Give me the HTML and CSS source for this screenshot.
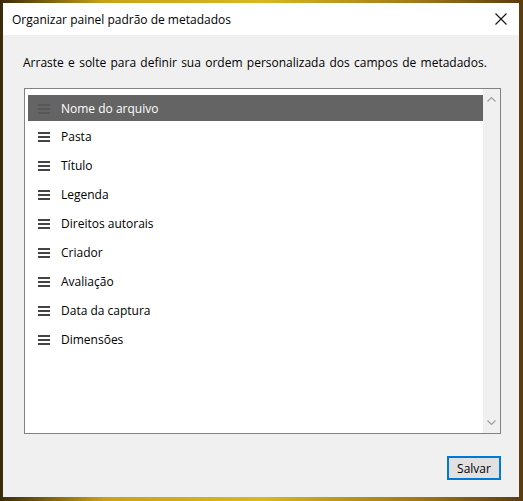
FILE: index.html
```html
<!DOCTYPE html>
<html lang="pt-BR">
<head>
    <meta charset="UTF-8">
    <title>Organizar painel padrão de metadados</title>
    <link rel="stylesheet" href="styles.css">
</head>
<body>
    <div class="dialog">
        <div class="title-bar">
            <span class="title">Organizar painel padrão de metadados</span>
            <svg class="close" width="12" height="12" viewBox="0 0 12 12">
                <path d="M0.5 0.5 L11.5 11.5 M11.5 0.5 L0.5 11.5" stroke="#111" stroke-width="1.1" fill="none"/>
            </svg>
        </div>
        <div class="content">
            <p class="hint">Arraste e solte para definir sua ordem personalizada dos campos de metadados.</p>
            <div class="list-box">
                <ul class="fields">
                    <li class="selected"><span class="grip"></span>Nome do arquivo</li>
                    <li><span class="grip"></span>Pasta</li>
                    <li><span class="grip"></span>Título</li>
                    <li><span class="grip"></span>Legenda</li>
                    <li><span class="grip"></span>Direitos autorais</li>
                    <li><span class="grip"></span>Criador</li>
                    <li><span class="grip"></span>Avaliação</li>
                    <li><span class="grip"></span>Data da captura</li>
                    <li><span class="grip"></span>Dimensões</li>
                </ul>
                <div class="scrollbar">
                    <svg width="9" height="5" viewBox="0 0 9 5"><path d="M0.5 4.5 L4.5 0.5 L8.5 4.5" stroke="#a0a0a0" stroke-width="1.2" fill="none"/></svg>
                    <svg width="9" height="5" viewBox="0 0 9 5"><path d="M0.5 0.5 L4.5 4.5 L8.5 0.5" stroke="#a0a0a0" stroke-width="1.2" fill="none"/></svg>
                </div>
            </div>
            <div class="actions">
                <button type="button">Salvar</button>
            </div>
        </div>
    </div>
</body>
</html>
```

FILE: styles.css
```css
* {
    margin: 0;
    padding: 0;
    box-sizing: border-box;
}

body {
    width: 523px;
    height: 501px;
    padding: 3px 4px 4px 3px;
    background: linear-gradient(90deg, #3a2a08 0%, #c9a21a 20%, #d8b820 50%, #a07818 80%, #5a3c10 100%);
    font-family: 'Open Sans', 'Noto Sans', sans-serif;
    font-size: 12px;
    color: #000;
}

.dialog {
    height: 100%;
    display: flex;
    flex-direction: column;
    background: #f0f0f0;
}

.title-bar {
    height: 32px;
    background: #fff;
    display: flex;
    align-items: center;
    justify-content: space-between;
    padding: 0 12px 0 9px;
}

.content {
    flex: 1;
    display: flex;
    flex-direction: column;
    padding: 19px 18px 17px 20px;
}

.hint {
    line-height: 18px;
    margin-bottom: 16px;
    word-spacing: 1.2px;
}

.list-box {
    height: 346px;
    margin-left: 1px;
    border: 1px solid #828282;
    background: #fff;
    display: flex;
    padding: 4px 0 0 3px;
}

.fields {
    list-style: none;
    flex: 1;
}

.fields li {
    height: 29px;
    display: flex;
    align-items: center;
    padding-left: 10px;
}

.fields li.selected {
    padding-top: 2px;
    background: linear-gradient(#fff 0, #fff 2px, #646464 2px, #646464 28px, #fff 28px);
    color: #fff;
}

.grip {
    width: 12px;
    height: 10px;
    margin-right: 11px;
    border-top: 2px solid #444;
    border-bottom: 2px solid #444;
    position: relative;
}

.grip::after {
    content: "";
    position: absolute;
    left: 0;
    right: 0;
    top: 2px;
    height: 2px;
    background: #444;
}

.selected .grip {
    border-color: #575757;
}

.selected .grip::after {
    background: #575757;
}

.scrollbar {
    width: 17px;
    margin-top: -4px;
    background: #f0f0f0;
    display: flex;
    flex-direction: column;
    justify-content: space-between;
    align-items: center;
    padding: 8px 0 8px;
}

.actions {
    margin-top: auto;
    display: flex;
    justify-content: flex-end;
}

button {
    width: 54px;
    height: 24px;
    border: 2px solid #0078d7;
    background: #e1e1e1;
    font-family: inherit;
    font-size: 12px;
    color: #000;
}
```
